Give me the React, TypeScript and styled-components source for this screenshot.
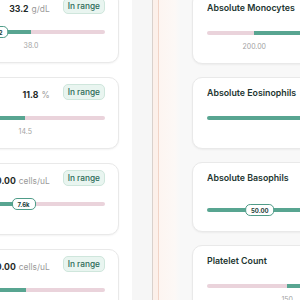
import React from 'react'
import styled, { createGlobalStyle } from 'styled-components'

const GlobalStyle = createGlobalStyle`
  html, body {
    margin: 0;
    padding: 0;
  }
  body {
    width: 300px;
    height: 300px;
    overflow: hidden;
    background: #fff;
    font-family: Inter, 'Noto Sans', sans-serif;
  }
`

type Tone = 'ok' | 'off'

interface Segment {
  size: number
  tone: Tone
}

interface Marker {
  at: number
  label: string
}

interface Metric {
  name: string
  value?: string
  unit?: string
  segments: Segment[]
  thumb?: Marker
  ticks: Marker[]
  trackGap?: number
}

const leftMetrics: Metric[] = [
  {
    name: 'Hemoglobin',
    value: '33.2',
    unit: 'g/dL',
    segments: [
      { size: 64.9, tone: 'ok' },
      { size: 35.1, tone: 'off' },
    ],
    thumb: { at: 48.3, label: '33.2' },
    ticks: [
      { at: 20, label: '32.0' },
      { at: 64.9, label: '38.0' },
    ],
  },
  {
    name: 'RDW',
    value: '11.8',
    unit: '%',
    segments: [
      { size: 62.2, tone: 'ok' },
      { size: 37.8, tone: 'off' },
    ],
    thumb: { at: 40, label: '11.8' },
    ticks: [
      { at: 20, label: '11.5' },
      { at: 62.2, label: '14.5' },
    ],
  },
  {
    name: 'White Blood Cells',
    value: '7600.00',
    unit: 'cells/uL',
    segments: [
      { size: 61.4, tone: 'ok' },
      { size: 38.6, tone: 'off' },
    ],
    thumb: { at: 61.4, label: '7.6k' },
    ticks: [{ at: 20, label: '3.8k' }],
  },
  {
    name: 'Neutrophils',
    value: '4100.00',
    unit: 'cells/uL',
    segments: [
      { size: 62.4, tone: 'ok' },
      { size: 37.6, tone: 'off' },
    ],
    thumb: { at: 40, label: '4.1k' },
    ticks: [{ at: 20, label: '1.5k' }],
  },
]

const rightMetrics: Metric[] = [
  {
    name: 'Absolute Monocytes',
    segments: [
      { size: 22.4, tone: 'off' },
      { size: 77.6, tone: 'ok' },
    ],
    thumb: { at: 60, label: '420.00' },
    ticks: [
      { at: 22.4, label: '200.00' },
      { at: 85, label: '950.00' },
    ],
  },
  {
    name: 'Absolute Eosinophils',
    segments: [{ size: 100, tone: 'ok' }],
    thumb: { at: 70, label: '150.00' },
    ticks: [{ at: 85, label: '500.00' }],
  },
  {
    name: 'Absolute Basophils',
    segments: [{ size: 100, tone: 'ok' }],
    thumb: { at: 25, label: '50.00' },
    ticks: [],
    trackGap: 19,
  },
  {
    name: 'Platelet Count',
    segments: [
      { size: 38, tone: 'off' },
      { size: 62, tone: 'ok' },
    ],
    thumb: { at: 70, label: '260' },
    ticks: [{ at: 38, label: '150' }],
  },
]

const Stage = styled.div`
  display: flex;
  height: 330px;
  margin: -9px 0 0 -134px;
`

const LeftPane = styled.div`
  flex: 0 0 auto;
  display: flex;
  flex-direction: column;
  gap: 14px;
  padding: 0 13px;
  background: #fff;
`

const Gutter = styled.div`
  flex: 0 0 20px;
  background: #f6f6f6;
`

const Resizer = styled.div`
  flex: 0 0 7px;
  box-sizing: border-box;
  border-left: 1px solid #d9d1cc;
  border-right: 1px solid #f1d4c7;
  background: #fcf0ea;
`

const RightPane = styled.div`
  flex: 1 0 auto;
  display: flex;
  flex-direction: column;
  gap: 13px;
  padding: 1px 0 0 33px;
  background: linear-gradient(90deg, #fdf5f1 0, #fcf8f6 16px, #f8f8f8 20px);
`

const Card = styled.div`
  width: 240px;
  min-height: 70px;
  box-sizing: border-box;
  display: flex;
  flex-direction: column;
  padding: 6px 13px 11px 14px;
  background: #fff;
  border: 1px solid #e9e9e9;
  border-radius: 10px;
  box-shadow: 0 1px 2px rgba(0, 0, 0, 0.05);
`

const Header = styled.div`
  height: 16px;
  display: flex;
  align-items: center;
  justify-content: space-between;
  gap: 8px;
`

const Title = styled.span`
  flex: 1 1 auto;
  min-width: 0;
  overflow: hidden;
  white-space: nowrap;
  font-size: 8.8px;
  font-weight: 600;
  color: #1d3631;
`

const Reading = styled.div`
  flex: 0 0 auto;
  display: flex;
  align-items: center;
  gap: 13px;
  white-space: nowrap;
`

const Value = styled.span`
  font-size: 8.7px;
  font-weight: 700;
  color: #1f2a27;
`

const Unit = styled.span`
  margin-left: 3px;
  font-size: 8.4px;
  font-weight: 400;
  color: #9a9a9a;
`

const Badge = styled.span`
  height: 16px;
  box-sizing: border-box;
  display: flex;
  align-items: center;
  padding: 0 4px;
  border: 1px solid #cfe6dc;
  border-radius: 5px;
  background: #e9f5f0;
  color: #2c6a57;
  font-size: 8.3px;
  font-weight: 500;
  white-space: nowrap;
`

const Track = styled.div<{ $gap: number }>`
  position: relative;
  height: 12px;
  margin-top: ${(p) => p.$gap}px;
`

const Rail = styled.div`
  position: absolute;
  left: 0;
  right: 0;
  top: 4px;
  height: 4px;
  display: flex;
  border-radius: 2px;
  overflow: hidden;
`

const Fill = styled.div<{ $tone: Tone }>`
  height: 100%;
  background: ${(p) => (p.$tone === 'ok' ? '#58a591' : '#ead3db')};
`

const Thumb = styled.div`
  position: absolute;
  top: 0;
  height: 12px;
  box-sizing: border-box;
  display: flex;
  align-items: center;
  padding: 0 5px;
  transform: translateX(-50%);
  border: 1.5px solid #4f9c88;
  border-radius: 5px;
  background: #fff;
  color: #22403a;
  font-size: 6px;
  font-weight: 700;
  white-space: nowrap;
`

const TickRow = styled.div`
  position: relative;
  height: 11px;
  margin-top: 2px;
`

const Tick = styled.span`
  position: absolute;
  top: 0;
  transform: translateX(-50%);
  line-height: 11px;
  font-size: 7px;
  color: #a3a3a3;
  white-space: nowrap;
`

function RangeBar({ metric }: { metric: Metric }) {
  return (
    <>
      <Track $gap={metric.trackGap ?? 12}>
        <Rail>
          {metric.segments.map((s, i) => (
            <Fill key={i} $tone={s.tone} style={{ width: `${s.size}%` }} />
          ))}
        </Rail>
        {metric.thumb && <Thumb style={{ left: `${metric.thumb.at}%` }}>{metric.thumb.label}</Thumb>}
      </Track>
      {metric.ticks.length > 0 && (
        <TickRow>
          {metric.ticks.map((t) => (
            <Tick key={t.label} style={{ left: `${t.at}%` }}>
              {t.label}
            </Tick>
          ))}
        </TickRow>
      )}
    </>
  )
}

function MetricCard({ metric }: { metric: Metric }) {
  return (
    <Card>
      <Header>
        <Title>{metric.name}</Title>
        {metric.value && (
          <Reading>
            <span>
              <Value>{metric.value}</Value>
              <Unit>{metric.unit}</Unit>
            </span>
            <Badge>In range</Badge>
          </Reading>
        )}
      </Header>
      <RangeBar metric={metric} />
    </Card>
  )
}

export default function App() {
  return (
    <>
      <GlobalStyle />
      <Stage>
        <LeftPane>
          {leftMetrics.map((m) => (
            <MetricCard key={m.name} metric={m} />
          ))}
        </LeftPane>
        <Gutter />
        <Resizer />
        <RightPane>
          {rightMetrics.map((m) => (
            <MetricCard key={m.name} metric={m} />
          ))}
        </RightPane>
      </Stage>
    </>
  )
}
